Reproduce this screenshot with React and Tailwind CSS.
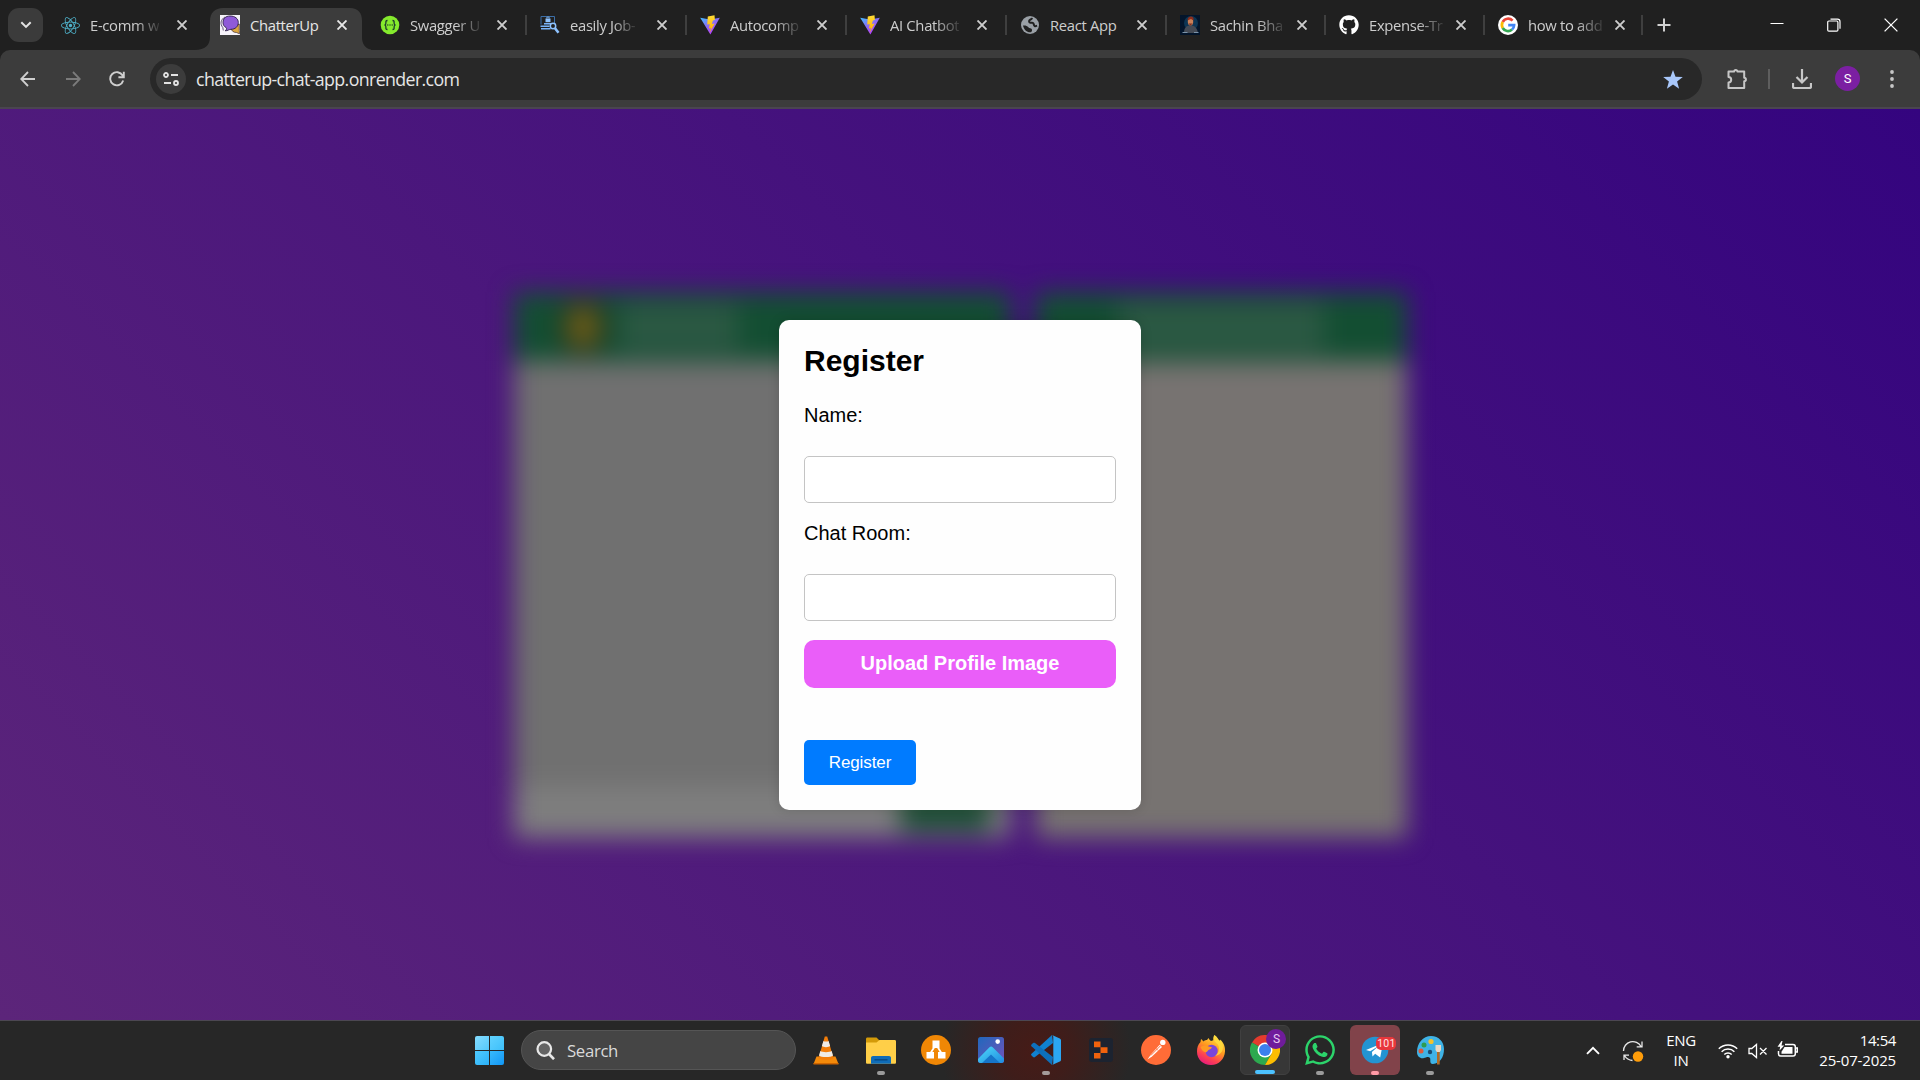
import React from "react";
import { FaReact, FaGithub, FaWhatsapp } from "react-icons/fa";

const UI = "font-['Open_Sans',sans-serif]";

/* ---------- tab favicons ---------- */

function ReactIcon() {
  return <FaReact className="size-[19px] text-[#4fb3cc]" />;
}

function ChatIcon() {
  return (
    <svg viewBox="0 0 20 20" className="size-5">
      <rect width="20" height="20" fill="#f6f3fa" />
      <path d="M11 13 19.300 9v6.500l.2 3.300-3-1.300c-3 0-5-1.500-5.500-4.500z" fill="#dba640" stroke="#3b2a33" strokeWidth=".7" />
      <path d="M10 1c5 0 8.300 2.600 8.300 6.500 0 4-3 6.800-7.300 6.800-1.800 0-3.300 1.600-5.800 1.500 1.300-1 1.600-2 1.200-3C4 11.500 3 9.800 3 7.500 3 3.800 5.500 1 10 1z" fill="#8f5ad8" stroke="#2d2145" strokeWidth=".9" />
      <path d="M5 2C.6 4.500-.2 9 2.800 12.500L3.300 15.500" fill="none" stroke="#3b2a55" strokeWidth=".8" />
    </svg>
  );
}

function SwaggerIcon() {
  return (
    <svg viewBox="0 0 20 20" className="size-5">
      <circle cx="10" cy="10" r="9.300" fill="#85ea2d" />
      <g fill="none" stroke="#1d3b2c" strokeWidth="1.300">
        <path d="M7.500 5.500c-2 0-1.600 1.300-1.600 2.600S5.300 10 4.500 10c.8 0 1.400.6 1.400 1.900s-.4 2.600 1.600 2.600" />
        <path d="M12.500 5.500c2 0 1.600 1.300 1.600 2.600s.6 1.900 1.400 1.900c-.8 0-1.400.6-1.400 1.900s.4 2.600-1.600 2.600" />
      </g>
      <g fill="#1d3b2c"><circle cx="7.800" cy="10" r=".7" /><circle cx="10" cy="10" r=".7" /><circle cx="12.200" cy="10" r=".7" /></g>
    </svg>
  );
}

function JobIcon() {
  return (
    <svg viewBox="0 0 20 20" className="size-5" fill="none">
      <path d="M1 9.500v-8h13.500V8" stroke="#3c6fa8" strokeWidth="1" />
      <path d="M5.500 3.500h5v3.700h-5z" fill="#8ec3ff" />
      <path d="M6.800 3.500V2.200h2.400v1.300" stroke="#8ec3ff" strokeWidth=".8" />
      <path d="M4 8.800h7M.5 11.300h9M1 13.700h9.500" stroke="#78b4fa" strokeWidth="1.500" />
      <circle cx="13" cy="11" r="2.700" stroke="#8ec3ff" strokeWidth="1.500" />
      <path d="m15 13.300 3.500 4.500" stroke="#8ec3ff" strokeWidth="2.600" />
    </svg>
  );
}

function ViteIcon() {
  return (
    <svg viewBox="0 0 20 20" className="size-5">
      <defs>
        <linearGradient id="vite-v" x1="0" y1="0" x2=".7" y2="1">
          <stop offset="0" stopColor="#41bdff" />
          <stop offset=".5" stopColor="#8a6ef5" />
          <stop offset="1" stopColor="#bd34fe" />
        </linearGradient>
        <linearGradient id="vite-b" x1="0" y1="0" x2="0" y2="1">
          <stop offset="0" stopColor="#ffdd35" />
          <stop offset="1" stopColor="#ffa800" />
        </linearGradient>
      </defs>
      <path d="M.2 2.700 10 4.500l9.800-1.800L10.400 19.600z" fill="url(#vite-v)" />
      <path d="M14.500.2 7.800 1.500 7.200 9.600l2.600-.4-1 4.400 2.200-.7-1.500 5 5.200-9.400-2.800.5 1-3.400 2-.6z" fill="url(#vite-b)" />
    </svg>
  );
}

function GlobeIcon() {
  return (
    <svg viewBox="0 0 20 20" className="size-5">
      <circle cx="10" cy="10" r="9" fill="#9aa0a6" />
      <path d="M3 10.500c2.300-.3 4.200.2 5.200 1.500.8 1.100 1.600 1.300 2.800 1.500 1.300.3 1.500 2.800 0 3.800-3.800.5-7-2.300-8-6.800z" fill="#202020" />
      <path d="M12 2.800c-.2 1.700-1.200 1.500-2 2-1.300.8-1.200 2.600.3 2.900 1.500.2 2-.5 2.900.4.900 1 .3 2.300 1.500 2.900.8.400 1.400 0 2.400-.3" fill="none" stroke="#202020" strokeWidth="2" />
    </svg>
  );
}

function PersonIcon() {
  return (
    <svg viewBox="0 0 20 20" className="size-5">
      <rect width="20" height="20" fill="#03152b" />
      <ellipse cx="11" cy="8" rx="7" ry="7" fill="#0d3554" />
      <path d="M4 18c0-5 2-7.500 6.500-7.500S17 13 18 18z" fill="#444a55" />
      <path d="M2.500 17.500h5M14 17.500h4.500" stroke="#7a93aa" strokeWidth="1" />
      <ellipse cx="10.500" cy="6.700" rx="2.700" ry="3.700" fill="#c98058" />
      <path d="M7.500 5.500c0-3 1.500-4 3.500-4s3 1.500 2.500 4L11 4z" fill="#8c2d1c" />
      <path d="M8.500 8.500h4l-2 2.300z" fill="#7c2f20" />
    </svg>
  );
}

function GithubIcon() {
  return <FaGithub className="size-5 text-white" />;
}

function GoogleIcon() {
  return (
    <svg viewBox="0 0 20 20" className="size-5">
      <circle cx="10" cy="10" r="10" fill="#fff" />
      <g fill="none" strokeWidth="2.700">
        <path d="M14.600 5.700A6.100 6.100 0 0 0 4.700 7" stroke="#ea4335" />
        <path d="M4.700 7a6.100 6.100 0 0 0 0 6" stroke="#fbbc05" />
        <path d="M4.700 13a6.100 6.100 0 0 0 9.300 1.600" stroke="#34a853" />
        <path d="M14 14.600a6.100 6.100 0 0 0 2.100-4.400H10.200" stroke="#4285f4" />
      </g>
    </svg>
  );
}

const tabs = [
  { title: "E-comm w", icon: ReactIcon, fade: true },
  { title: "ChatterUp", icon: ChatIcon, active: true },
  { title: "Swagger U", icon: SwaggerIcon, sep: true, fade: true },
  { title: "easily Job-", icon: JobIcon, sep: true, fade: true },
  { title: "Autocomp", icon: ViteIcon, sep: true, fade: true },
  { title: "AI Chatbot", icon: ViteIcon, sep: true, fade: true },
  { title: "React App", icon: GlobeIcon, sep: true },
  { title: "Sachin Bha", icon: PersonIcon, sep: true, fade: true, width: "w-[159px]" },
  { title: "Expense-Tr", icon: GithubIcon, sep: true, fade: true, width: "w-[159px]" },
  { title: "how to add", icon: GoogleIcon, sep: true, fade: true, width: "w-[158px]" },
];

function Tab({ title, icon: Icon, active, sep, fade, width = "w-[160px]" }) {
  return (
    <div className={`relative flex h-full shrink-0 items-center pl-[13px] ${width}`}>
      {active && (
        <svg viewBox="0 0 176 42" className="absolute -left-[12px] top-2 h-[42px] w-[176px]">
          <path d="M0 42c10 0 15-5 15-13V13C15 5 20 0 28 0h127c8 0 12 5 12 13v16c0 8 4 13 13 13z" fill="#3c3c3c" />
        </svg>
      )}
      <span className="relative flex size-5 items-center justify-center">
        <Icon />
      </span>
      <span className="relative ml-[10px] w-[72px]">
        <span
          className={`inline-block text-[14.8px] leading-5 tracking-[-0.32px] whitespace-nowrap ${
            active ? "text-[#e6e6e6]" : "text-[#cdcdcd]"
          } ${fade ? "[mask-image:linear-gradient(to_right,black_65%,rgba(0,0,0,0.15)_100%)]" : ""}`}
        >
          {title}
        </span>
      </span>
      <svg viewBox="0 0 10 10" className="relative ml-[15px] size-[10px]" stroke={active ? "#e8e8e8" : "#cdcdcd"} strokeWidth="1.900">
        <path d="m.5.500 9 9M9.500.500.500 9.500" />
      </svg>
      {sep && <span className="absolute right-0 top-[15px] h-5 w-[2px] bg-[#3f3f3f]" />}
    </div>
  );
}

function TabStrip() {
  return (
    <div className="flex h-[50px] bg-[#202020]">
      <div className="flex w-[47px] items-center pl-2">
        <div className="flex h-[34px] w-[35px] items-center justify-center rounded-[11px] bg-[#3b3b3b]">
          <svg viewBox="0 0 12 8" className="h-2 w-3" fill="none" stroke="#e3e3e3" strokeWidth="2">
            <path d="m1.300 1.200 4.700 4.700 4.700-4.700" />
          </svg>
        </div>
      </div>
      {tabs.map((t) => (
        <Tab key={t.title} {...t} />
      ))}
      <div className="flex flex-1 items-center pl-[14px]">
        <svg viewBox="0 0 14 14" className="size-[14px]" stroke="#d0d0d0" strokeWidth="2">
          <path d="M7 .5v13M.5 7h13" />
        </svg>
      </div>
      <div className="flex w-[171px] items-center justify-between pr-[22px] pl-[21px]">
        <svg viewBox="0 0 14 14" className="size-[14px]" stroke="#fff" strokeWidth="1">
          <path d="M.5 5.500h13" />
        </svg>
        <svg viewBox="0 0 14 14" className="size-[14px]" fill="none" stroke="#fff" strokeWidth="1.200">
          <rect x=".7" y="3" width="10.200" height="10.200" rx="1.200" />
          <path d="M3.500 1.200h7c1.500 0 2.500 1 2.500 2.500v7" />
        </svg>
        <svg viewBox="0 0 14 14" className="size-[14px]" stroke="#fff" strokeWidth="1.300">
          <path d="m.6.600 12.800 12.800M13.400.600.600 13.400" />
        </svg>
      </div>
    </div>
  );
}

function Toolbar() {
  return (
    <div className="bg-[#202020]">
      <div className="flex h-[59px] items-center rounded-t-[10px] border-b-2 border-[#4a4550] bg-[#3c3c3c]">
        <svg viewBox="0 0 16 16" className="ml-5 size-4" fill="none" stroke="#cfcfcf" strokeWidth="1.800">
          <path d="M15 8H1.500M8 1 1.200 8 8 15" />
        </svg>
        <svg viewBox="0 0 16 16" className="ml-[29px] size-4" fill="none" stroke="#7b7b7b" strokeWidth="1.800">
          <path d="M1 8h13.500M8 1l6.800 7L8 15" />
        </svg>
        <svg viewBox="0 0 16 16" className="ml-[28px] size-4" fill="none" stroke="#cfcfcf" strokeWidth="1.900">
          <path d="M14.200 9.500A6.600 6.600 0 1 1 13.600 4.500L14.500 6M14.800.8V6.200H9.400" />
        </svg>
        <div className="ml-[25px] flex h-[42px] w-[1552px] items-center rounded-full bg-[#282828] pr-[19px] pl-[6px]">
          <div className="flex size-[30px] items-center justify-center rounded-full bg-[#3c3c3c]">
            <svg viewBox="0 0 16 14" className="h-[14px] w-4" fill="none" stroke="#e3e3e3" strokeWidth="1.800">
              <circle cx="3" cy="3" r="2" />
              <path d="M8 3h7M1 11h7" />
              <circle cx="13" cy="11" r="2" />
            </svg>
          </div>
          <span className="ml-[10px] text-[17.8px] leading-6 tracking-[-0.62px] text-[#e6e6e6]">
            chatterup-chat-app.onrender.com
          </span>
          <svg viewBox="0 0 20 19" className="mt-[2px] ml-auto h-[19px] w-5" fill="#a8c7fa">
            <path d="m10 0 2.500 6.700 7.300.3-5.700 4.500 2 7.200L10 14.600l-6.100 4.100 2-7.200L.2 7l7.300-.3z" />
          </svg>
        </div>
        <svg viewBox="0 0 22 22" className="ml-6 size-[22px]" fill="none" stroke="#c7c7c7" strokeWidth="2" strokeLinejoin="round">
          <path d="M2.500 3.500h5.700a1.600 1.600 0 0 1 3.200 0h6.800v6.300a1.700 1.700 0 0 1 0 3.400v6.800H2.500v-5.500a2.700 2.700 0 0 0 0-5.400z" />
        </svg>
        <span className="ml-[20px] h-5 w-[2px] bg-[#5e5e5e]" />
        <svg viewBox="0 0 20 20" className="ml-[22px] size-5" fill="none" stroke="#c7c7c7" strokeWidth="2.200">
          <path d="M10 0v13M4.500 8l5.500 5.500L15.500 8M1 14v3.500c0 1 .5 1.500 1.500 1.500h15c1 0 1.500-.5 1.500-1.500V14" />
        </svg>
        <div className="ml-[23px] flex size-[25px] items-center justify-center rounded-full bg-[#7b1fa2] font-['Roboto',sans-serif] text-[13px] text-white">
          S
        </div>
        <svg viewBox="0 0 4 18" className="ml-[30px] h-[18px] w-1" fill="#c7c7c7">
          <circle cx="2" cy="2" r="1.900" /><circle cx="2" cy="9" r="1.900" /><circle cx="2" cy="16" r="1.900" />
        </svg>
      </div>
    </div>
  );
}

/* ---------- page ---------- */

function ChatBackdrop() {
  return (
    <div className="absolute inset-0 flex justify-center pt-[183px] blur-[12.5px]">
      <div className="flex h-[546px] gap-[26px]">
        <div className="flex w-[496px] flex-col bg-[#707070]">
          <div className="flex h-[69px] items-center bg-[#134e32] pl-[46px]">
            <span className="h-[56px] w-[46px] rounded-full border-[9px] border-[#33371f] bg-[#6b6018]" />
            <span className="ml-[14px] h-[46px] w-[118px] bg-[#2b5843]" />
          </div>
          <div className="mt-auto flex h-[52px] items-center justify-end bg-[#7e7e7e] pr-5">
            <span className="h-[38px] w-[90px] rounded-[5px] bg-[#1d4f36]" />
          </div>
        </div>
        <div className="flex w-[371px] flex-col bg-[#777371]">
          <div className="flex h-[69px] items-center justify-center bg-[#134e32]">
            <span className="h-[50px] w-[206px] bg-[#2b5843]" />
          </div>
        </div>
      </div>
    </div>
  );
}

function Field({ label }) {
  return (
    <label className="block">
      <span className="block h-[23px] text-[20px] leading-[23px]">{label}</span>
      <input className="mt-[29px] block h-[47px] w-full rounded-[5px] border border-[#c4c4c4] bg-white px-3 outline-none" />
    </label>
  );
}

function RegisterModal() {
  return (
    <form className="relative mt-[211px] h-[490px] w-[362px] rounded-[10px] bg-[#fefefe] px-[25px] pt-6 font-['Liberation_Sans',Arial,sans-serif] text-black shadow-[0_0_12px_rgba(0,0,0,0.15)]">
      <h2 className="text-[30px] leading-[34px] font-bold">Register</h2>
      <div className="mt-[26px]"><Field label="Name:" /></div>
      <div className="mt-[19px]"><Field label="Chat Room:" /></div>
      <button type="button" className="mt-[19px] block h-[48px] w-full rounded-[10px] bg-[#ea5ef9] pb-[2px] text-[20px] font-bold text-white">
        Upload Profile Image
      </button>
      <button type="button" className="mt-[52px] block h-[45px] w-[112px] rounded-[5px] bg-[#007bff] text-[17px] tracking-[-0.1px] text-white">
        Register
      </button>
    </form>
  );
}

/* ---------- taskbar ---------- */

function Vlc() {
  return (
    <svg viewBox="0 0 30 30" className="size-[30px]">
      <path d="M5.500 21.500h19L27.500 29h-25z" fill="#f48a0a" />
      <path d="M13.800 1.500h2.400L22.500 23c-2 2.500-13 2.500-15 0z" fill="#f27d0a" />
      <path d="m12.400 6-1.500 5c1.500 1.500 6.700 1.500 8.200 0l-1.500-5c-1 .8-4.200.8-5.200 0zM9.300 16 8 20.500c2 2 12 2 14 0L20.700 16c-2 1.500-9.400 1.500-11.400 0z" fill="#efebe6" />
      <path d="M2.500 28h25v1.500h-25z" fill="#cf6500" />
    </svg>
  );
}
function Folder() {
  return (
    <svg viewBox="0 0 30 30" className="size-[30px]">
      <path d="M0 4c0-1 .6-1.500 1.500-1.500h9l3 3V9H0z" fill="#d39a09" />
      <path d="M0 7.500h10.500l3-2.500h15c1 0 1.500.5 1.500 1.500v21c0 .8-.5 1.300-1.500 1.300h-27c-1 0-1.500-.5-1.500-1.300z" fill="#ffcf48" />
      <path d="M5 28.800V23c0-1.200.8-2 2-2h16c1.200 0 2 .8 2 2v5.800z" fill="#0f6cb8" />
      <path d="M8.500 24.800h13" stroke="#084b86" strokeWidth="1.500" />
    </svg>
  );
}
function Draw() {
  return (
    <svg viewBox="0 0 30 30" className="size-[30px]">
      <circle cx="15" cy="15" r="15" fill="#f08705" />
      <path d="m14 11-5 8M16 11l5 8" stroke="#fff" strokeWidth="1.800" />
      <path d="M11.500 5.500h7v7.500h-7zM5.500 17h7.500v6.500H5.500zM17 17h7.500v6.500H17z" fill="#fff" />
    </svg>
  );
}
function Photos() {
  return (
    <svg viewBox="0 0 30 30" className="size-[30px]">
      <defs>
        <linearGradient id="ph-a" x1="0" y1="0" x2="1" y2="1"><stop stopColor="#2068bd" /><stop offset="1" stopColor="#7352b8" /></linearGradient>
        <linearGradient id="ph-b" x1="0" y1="0" x2="1" y2="1"><stop stopColor="#4fdcfa" /><stop offset="1" stopColor="#1e8ae0" /></linearGradient>
      </defs>
      <rect x="2" y="2" width="26" height="26" rx="2.500" fill="url(#ph-a)" />
      <path d="M2 24 13.500 12.200c1-1 2.200-1 3.200 0L28 23.500v2c0 1.500-1 2.500-2.500 2.500h-21C3 28 2 27 2 25.500z" fill="url(#ph-b)" />
      <path d="m6 28 9-8.500 9 8.500z" fill="#1675c9" />
      <circle cx="21.700" cy="6.600" r="2.300" fill="#fff" />
    </svg>
  );
}
function Code() {
  return (
    <svg viewBox="0 0 30 30" className="size-[30px]">
      <path d="M22 8 4 22c-.7.500-1.300.5-1.900 0L.5 20.600c-.6-.6-.6-1.300 0-1.900L21 0z" fill="#1081d0" />
      <path d="M22 22 4 8c-.7-.5-1.300-.5-1.900 0L.5 9.400c-.6.600-.6 1.300 0 1.900L21 30z" fill="#0d70bc" />
      <path d="M21 0l7.800 3.400c.8.400 1.200 1 1.200 1.900v19.400c0 .9-.4 1.500-1.200 1.900L21 30c1-.5 1.300-1.200 1.300-2V2c0-.8-.3-1.500-1.300-2z" fill="#2ba6f2" />
    </svg>
  );
}
function Blocks() {
  return (
    <svg viewBox="0 0 30 30" className="size-[30px]">
      <rect x="3" y="3" width="24" height="24" rx="3" fill="#1c2330" />
      <path d="M8 6.500h6.500v5.700H8zM14.500 12.200h7v5.700h-7zM8 17.900h6.500v5.700H8z" fill="#f0620d" />
    </svg>
  );
}
function Postman() {
  return (
    <svg viewBox="0 0 30 30" className="size-[30px]">
      <circle cx="15" cy="15" r="15" fill="#ff6c37" />
      <circle cx="21.800" cy="7.400" r="2.700" fill="#fff" />
      <path d="m6.500 24.500 3.200-4.700 9-10 2.300 2.200-10 9.500z" fill="#fff" />
      <path d="m9.800 20.500 9.500-9.500M14.500 13l2.500 2.500" stroke="#ff6c37" strokeWidth=".9" />
    </svg>
  );
}
function Firefox() {
  return (
    <svg viewBox="0 0 30 30" className="size-[30px]">
      <defs>
        <linearGradient id="ff-a" x1=".8" y1="0" x2=".3" y2="1">
          <stop stopColor="#fff04a" /><stop offset=".45" stopColor="#ff9a1f" /><stop offset=".75" stopColor="#ff4350" /><stop offset="1" stopColor="#e51a7e" />
        </linearGradient>
      </defs>
      <path d="M18.500 0c3 2 4 4.500 4.800 6 1-.2 1-1 1-1.500 4 4 5 8 4.700 12C28.500 24 23 30 15 30S1 24.500 1 16.500c0-4 1-7 3.500-9.500L5 4c1 .5 1.700 1.300 2.200 2.500C8.500 5.500 9.500 5 11 5L12.500 3c.5 1 1 2 2.500 3l2.300-.7C17 3 17.500 1.300 18.500 0z" fill="url(#ff-a)" />
      <circle cx="15.500" cy="16" r="6.200" fill="#7a46d9" />
      <path d="M4.500 12c3-1.500 6-2 8-.5l3.500.8c-.5 1.800-2.500 1.900-3.500 2.700-1 1-1.500 2-2.800 2.500C7.500 17 5.500 15 4.500 12z" fill="#ff9a22" />
      <path d="M18.500 0c-1.500 4 0 7 3 9 2.500 3 2 9-2.500 12 7-1.500 9.500-7 7-13-1.500-3-6-4-7.500-8z" fill="#ffdc3d" opacity=".85" />
    </svg>
  );
}
function Chrome() {
  return (
    <span className="relative">
      <svg viewBox="0 0 30 30" className="size-[30px]">
        <path d="M15 15 2 7.500A15 15 0 0 1 28 7.500H15z" fill="#e33b2e" />
        <path d="M2 7.500A15 15 0 0 0 15 30l6.500-11.200L15 15z" fill="#2da94f" />
        <path d="M28 7.500A15 15 0 0 1 15 30l6.500-11.200L15 7.500z" fill="#fdbd00" />
        <circle cx="15" cy="15" r="7.500" fill="#fff" />
        <circle cx="15" cy="15" r="6" fill="#3b7fee" />
      </svg>
      <span className="absolute -top-[6px] left-4 flex size-[20px] items-center justify-center rounded-full bg-[#6f1c9b] font-['Roboto',sans-serif] text-[12px] text-[#e6cdf2]">
        S
      </span>
    </span>
  );
}
function WhatsApp() {
  return <FaWhatsapp className="size-[34px] text-[#2cd46b]" />;
}
function Telegram() {
  return (
    <span className="relative">
      <svg viewBox="0 0 30 30" className="size-[30px]">
        <circle cx="15" cy="15" r="13.300" fill="#2394d2" />
        <path d="m6 15 17-7-2.800 14.500-5-3.800-2.700 2.800-.6-4.500 7-6.300-8.700 5.500z" fill="#fff" />
      </svg>
      <span className="absolute top-[2px] left-[16px] flex h-[13px] w-5 items-center justify-center rounded-[5px] bg-[#e8373c] font-['Roboto',sans-serif] text-[10.5px] tracking-[0.2px] text-[#ffe3e3]">
        101
      </span>
    </span>
  );
}
function Paint() {
  return (
    <svg viewBox="0 0 30 30" className="size-[30px]">
      <path d="M16 1C24 1 29 7 29 14c0 8-4 14.500-11 15-4 .2-2-4-3-6-1.500-2-4-.5-6 0-3 1-7-1-7-6C2 8 8 1 16 1z" fill="#3fb3e6" />
      <circle cx="6" cy="16" r="2.500" fill="#dd5a3b" /><circle cx="9" cy="10" r="2.500" fill="#2e9c50" />
      <circle cx="16" cy="6.500" r="2.600" fill="#f4c22c" /><circle cx="15" cy="17" r="2.200" fill="#1b4d73" />
      <path d="M20.500 10h5.500v5l-1.200 2h-3L20.500 15z" fill="#e9d8c4" /><path d="M22 17h2.700v12.500H22z" fill="#b06a25" />
    </svg>
  );
}

const apps = [
  { id: "vlc", icon: Vlc },
  { id: "folder", icon: Folder, run: "bg-[#9b9b9b]" },
  { id: "draw", icon: Draw },
  { id: "photos", icon: Photos },
  { id: "code", icon: Code, run: "bg-[#a39a99]" },
  { id: "blocks", icon: Blocks },
  { id: "postman", icon: Postman },
  { id: "firefox", icon: Firefox },
  { id: "chrome", icon: Chrome, run: "w-5! bg-[#4cc2ff]", tile: "bg-[#373737] border border-[#404040]" },
  { id: "whatsapp", icon: WhatsApp, run: "bg-[#9b9b9b]" },
  { id: "telegram", icon: Telegram, run: "bg-[#ff9aa6]", tile: "bg-[#81434a]" },
  { id: "paint", icon: Paint, run: "bg-[#9b9b9b]" },
];

function Taskbar() {
  return (
    <div className="flex h-[60px] border-t border-[#4c4752] bg-[#272727] bg-[radial-gradient(ellipse_95px_90px_at_1036px_30px,#461b17_0%,#3f1d1a_35%,transparent_100%)] pl-[475px]">
      <div className="mt-[15px] grid size-[29px] grid-cols-2 gap-px">
        <span className="rounded-tl-[2px] bg-linear-to-br from-[#84dcff] to-[#52c8fb]" />
        <span className="rounded-tr-[2px] bg-linear-to-br from-[#60d2ff] to-[#3cbffa]" />
        <span className="rounded-bl-[2px] bg-linear-to-br from-[#4fcbff] to-[#2ab1f8]" />
        <span className="rounded-br-[2px] bg-linear-to-br from-[#38bafc] to-[#0f96f5]" />
      </div>
      <div className="mt-[9px] ml-[17px] flex h-10 w-[275px] items-center rounded-full border border-[#555] bg-[#454545] pl-[14px]">
        <svg viewBox="0 0 19 19" className="size-[19px]" fill="none" stroke="#e8e8e8" strokeWidth="2.200">
          <circle cx="8.300" cy="8" r="6.800" fill="#646464" />
          <path d="m13 13 5 5.200" strokeWidth="2.600" />
        </svg>
        <span className="ml-[12px] pt-px text-[16.8px] tracking-[-0.35px] text-[#dadada]">Search</span>
      </div>
      <div className="ml-[2.500px] flex">
        {apps.map(({ id, icon: Icon, run, tile }) => (
          <div key={id} className="flex w-[54.95px] justify-center pt-1">
            <div className={`relative flex h-[50px] w-[50px] items-center justify-center rounded-[6px] ${tile || ""}`}>
              <Icon />
              {run && <span className={`absolute bottom-0 left-1/2 h-1 w-2 -translate-x-1/2 rounded-full ${run}`} />}
            </div>
          </div>
        ))}
      </div>
      <div className="ml-auto flex items-center pr-6 pb-[2px] text-[15px] leading-5 text-white">
        <svg viewBox="0 0 14 9" className="mt-[2px] h-[9px] w-[14px]" fill="none" stroke="#fff" strokeWidth="1.900">
          <path d="m1 7.800 6-6 6 6" />
        </svg>
        <svg viewBox="0 0 22 22" className="mt-[2px] ml-[22px] size-[22px]" fill="none" stroke="#e8e8e8" strokeWidth="1.300">
          <path d="M1.500 11A9.300 9.300 0 0 1 19 6.500M20 1.500v5.300h-5.300M2 20v-4.800h5M2.500 15.500C4.500 19 7 20.300 10.500 20.500" />
          <circle cx="16" cy="16.500" r="5.200" fill="#ff9d0a" stroke="none" />
        </svg>
        <div className="ml-[21px] w-[32px] text-center tracking-[-0.3px] whitespace-nowrap">
          <div>ENG</div>
          <div>IN</div>
        </div>
        <svg viewBox="0 0 20 16" className="mt-[2px] ml-[21px] h-4 w-5" fill="none" stroke="#fff" strokeWidth="1.500">
          <path d="M.8 5.800a13 13 0 0 1 18.400 0M3.600 8.700a9 9 0 0 1 12.800 0M6.300 11.500a5.200 5.200 0 0 1 7.400 0" />
          <circle cx="10" cy="13.700" r="1.700" fill="#fff" stroke="none" />
        </svg>
        <svg viewBox="0 0 20 16" className="mt-[2px] ml-[10px] h-4 w-5" fill="none" stroke="#fff" strokeWidth="1.300">
          <path d="M1 5.500h2.800L8.500 1.500v13l-4.700-4H1zM12 5l6.500 6.500M18.500 5 12 11.500" />
        </svg>
        <svg viewBox="0 0 21 18" className="mt-[1px] ml-[9px] h-[18px] w-[21px]" fill="none" stroke="#fff" strokeWidth="1.500">
          <path d="M8 3.500h8c1.500 0 2.300.8 2.300 2.300v7c0 1.500-.8 2.300-2.300 2.300H3.800c-1.500 0-2.300-.8-2.300-2.300V10" />
          <path d="M7.500 6h8v6.800h-11v-2z" fill="#fff" stroke="none" />
          <path d="M19 7h1.300v4H19" />
          <path d="M4.500 0 .5 5.800h2.700L2.500 9.500l4.700-5H4.500L5.500 0z" fill="#fff" stroke="none" />
        </svg>
        <div className="ml-[18px] w-[80px] text-right tracking-[-0.15px] whitespace-nowrap">
          <div className="tracking-[-0.4px]">14:54</div>
          <div>25-07-2025</div>
        </div>
      </div>
    </div>
  );
}

export default function App() {
  return (
    <div className={`flex h-[1080px] w-[1920px] flex-col overflow-hidden ${UI}`}>
      <TabStrip />
      <Toolbar />
      <main className="relative flex flex-1 items-start justify-center overflow-hidden bg-[linear-gradient(45deg,#5c257a_0%,#34047f_100%)]">
        <ChatBackdrop />
        <RegisterModal />
      </main>
      <Taskbar />
    </div>
  );
}
